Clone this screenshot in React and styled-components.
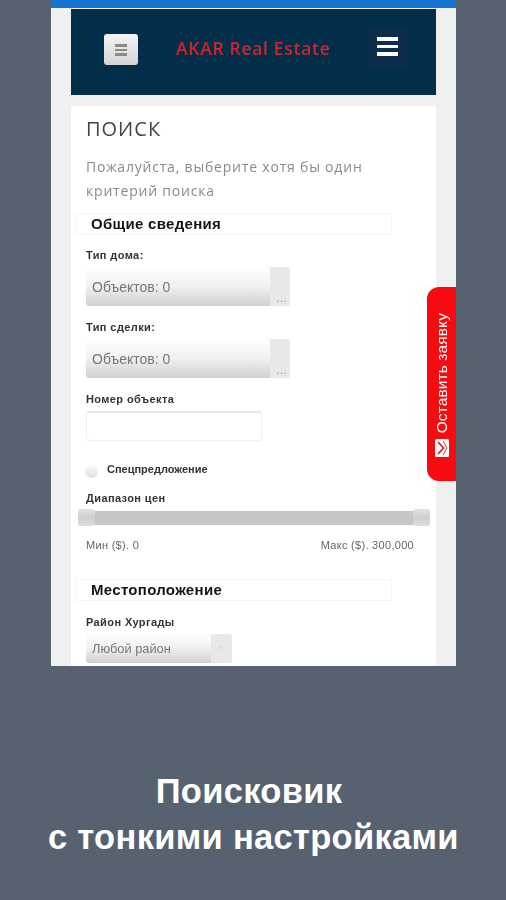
import React from "react";
import styled, { createGlobalStyle } from "styled-components";

const GlobalStyle = createGlobalStyle`
    html, body {
        margin: 0;
        padding: 0;
        background: #566270;
    }
    * {
        box-sizing: border-box;
    }
`;

function Select({ width, height, text, side, size, dots }) {
    return (
        <SelectBox $width={width} $height={height}>
            <SelectText $size={size}>{text}</SelectText>
            <SelectSide $side={side}>{dots ? <Dots>...</Dots> : <Caret />}</SelectSide>
        </SelectBox>
    );
}

function App() {
    return (
        <>
            <GlobalStyle />
            <Page>
                <Screen>
                    <StatusBar />
                    <Content>
                        <Header>
                            <MenuBtn>
                                <MenuIcon />
                            </MenuBtn>
                            <Brand>AKAR Real Estate</Brand>
                            <Burger>
                                <BurgerLine />
                                <BurgerLine />
                                <BurgerLine />
                            </Burger>
                        </Header>
                        <Card>
                            <Title>ПОИСК</Title>
                            <Intro>Пожалуйста, выберите хотя бы один критерий поиска</Intro>
                            <Legend>Общие сведения</Legend>

                            <Label $top={14}>Тип дома:</Label>
                            <Select width={204} height={39} side={20} size={14} text="Объектов: 0" dots />

                            <Label $top={15}>Тип сделки:</Label>
                            <Select width={204} height={39} side={20} size={14} text="Объектов: 0" dots />

                            <Label $top={15}>Номер объекта</Label>
                            <Input />

                            <RadioRow>
                                <Radio />
                                <RadioLabel>Спецпредложение</RadioLabel>
                            </RadioRow>

                            <Label $top={14}>Диапазон цен</Label>
                            <Slider>
                                <Handle $side="left" />
                                <Handle $side="right" />
                            </Slider>
                            <Range>
                                <span>Мин ($). 0</span>
                                <span>Макс ($). 300,000</span>
                            </Range>

                            <Legend $top={27}>Местоположение</Legend>
                            <Label $top={15}>Район Хургады</Label>
                            <Select width={146} height={29} side={21} size={12.8} text="Любой район" />
                        </Card>
                    </Content>
                    <RequestTab>
                        <MailIcon viewBox="0 0 14 18">
                            <rect x="0" y="0" width="14" height="18" rx="1.5" fill="#fff" />
                            <path d="M3 3 L8.5 9 L3 15" fill="none" stroke="#f00b12" strokeWidth="1.6" />
                            <path d="M8 2 L12 9 L8 16" fill="none" stroke="#f00b12" strokeWidth="0.8" />
                        </MailIcon>
                        <RequestText>Оставить заявку</RequestText>
                    </RequestTab>
                </Screen>
                <Caption>
                    Поисковик
                    <br />с тонкими настройками
                </Caption>
            </Page>
        </>
    );
}
export default App;

const Page = styled.div`
    width: 506px;
    height: 900px;
    padding-left: 51px;
    background: #566270;
    overflow: hidden;
`;

const Screen = styled.div`
    position: relative;
    width: 405px;
    height: 666px;
    background: #f0f0f1;
    overflow: hidden;
    filter: blur(0.6px);
`;

const StatusBar = styled.div`
    height: 8px;
    background: #1474d0;
`;

const Content = styled.div`
    padding: 1px 20px 0;
`;

const Header = styled.div`
    display: flex;
    align-items: flex-start;
    height: 86px;
    padding: 19px 29px 0 33px;
    background: #022e49;
`;

const MenuBtn = styled.div`
    display: flex;
    align-items: center;
    justify-content: center;
    width: 34px;
    height: 31px;
    margin-top: 6px;
    border-radius: 3px;
    background: linear-gradient(#f4f4f4, #d4d4d4);
`;

const MenuIcon = styled.div`
    width: 12px;
    height: 12px;
    border-top: 3px solid #8a8a8a;
    border-bottom: 3px solid #8a8a8a;
    background: linear-gradient(#8a8a8a, #8a8a8a) center / 100% 2px no-repeat;
`;

const Brand = styled.div`
    flex: 1;
    margin: 8px 0 0 38px;
    font-family: "Open Sans", sans-serif;
    font-size: 17.5px;
    font-weight: 600;
    line-height: 24px;
    letter-spacing: 0.7px;
    white-space: nowrap;
    color: #d0242f;
`;

const Burger = styled.div`
    display: flex;
    flex-direction: column;
    align-items: center;
    justify-content: center;
    gap: 4px;
    width: 40px;
    height: 40px;
    padding-bottom: 3px;
    background: #0e2d4c;
`;

const BurgerLine = styled.div`
    width: 21px;
    height: 3.5px;
    background: #fff;
`;

const Card = styled.div`
    height: 560px;
    margin-top: 11px;
    padding: 10px 15px 0;
    background: #fff;
`;

const Title = styled.h1`
    margin: 0;
    font-family: "Open Sans", sans-serif;
    font-size: 20px;
    font-weight: 400;
    line-height: 26px;
    letter-spacing: 1px;
    color: #444;
`;

const Intro = styled.p`
    margin: 13px 0 0;
    width: 300px;
    font-family: "Open Sans", sans-serif;
    font-size: 14px;
    line-height: 24px;
    letter-spacing: 0.8px;
    color: #8a8a8a;
`;

const Legend = styled.div`
    width: 316px;
    height: 22px;
    margin: ${(p) => p.$top || 10}px 0 0 -10px;
    padding-left: 14px;
    border: 1px solid #f6f6f6;
    font-family: "Liberation Sans", sans-serif;
    font-size: 15px;
    font-weight: 700;
    line-height: 20px;
    letter-spacing: 0.3px;
    color: #151515;
`;

const Label = styled.div`
    margin-top: ${(p) => p.$top}px;
    font-family: "Liberation Sans", sans-serif;
    font-size: 11px;
    font-weight: 700;
    line-height: 12px;
    letter-spacing: 0.4px;
    color: #333;
`;

const SelectBox = styled.div`
    display: flex;
    width: ${(p) => p.$width}px;
    height: ${(p) => p.$height}px;
    margin-top: 6px;
    border-radius: 3px;
    overflow: hidden;
    background: linear-gradient(#fcfcfc 8%, #f0f0f0 50%, #d0d0d0 100%);
`;

const SelectText = styled.div`
    flex: 1;
    align-self: center;
    padding-left: 6px;
    font-family: "Liberation Sans", sans-serif;
    font-size: ${(p) => p.$size}px;
    color: #777;
`;

const SelectSide = styled.div`
    position: relative;
    width: ${(p) => p.$side}px;
    background: #e8e8e8;
`;

const Dots = styled.span`
    position: absolute;
    right: 3px;
    bottom: 2px;
    font-family: "Liberation Sans", sans-serif;
    font-size: 11px;
    line-height: 11px;
    letter-spacing: 0.5px;
    color: #999;
`;

const Caret = styled.span`
    position: absolute;
    top: 12px;
    left: 7px;
    border: 3px solid transparent;
    border-top: 4px solid #dcdcdc;
`;

const Input = styled.div`
    width: 176px;
    height: 30px;
    margin-top: 6px;
    border: 1px solid #f0f0f0;
    border-top: 2px solid #e8e8e8;
    border-radius: 3px;
    background: #fff;
`;

const RadioRow = styled.div`
    display: flex;
    align-items: flex-start;
    margin: 22px 0 0 -1px;
`;

const Radio = styled.div`
    width: 13px;
    height: 13px;
    margin-top: 2px;
    border-radius: 50%;
    background: linear-gradient(#fafafa, #dedede);
`;

const RadioLabel = styled.div`
    margin-left: 9px;
    font-family: "Liberation Sans", sans-serif;
    font-size: 11px;
    font-weight: 700;
    line-height: 12px;
    color: #333;
`;

const Slider = styled.div`
    position: relative;
    width: 352px;
    height: 14px;
    margin: 7px 0 0 -8px;
    border-radius: 3px;
    background: #c6c6c6;
`;

const Handle = styled.div`
    position: absolute;
    top: -2px;
    ${(p) => p.$side}: 0;
    width: 17px;
    height: 17px;
    border-radius: 3px;
    background: linear-gradient(#e2e2e2, #cfcfcf 50%, #dedede);
`;

const Range = styled.div`
    display: flex;
    justify-content: space-between;
    width: 328px;
    margin-top: 14px;
    font-family: "Liberation Sans", sans-serif;
    font-size: 11px;
    line-height: 13px;
    letter-spacing: 0.3px;
    color: #666;
`;

const RequestTab = styled.div`
    position: absolute;
    top: 287px;
    right: 0;
    display: flex;
    flex-direction: column-reverse;
    align-items: center;
    justify-content: flex-start;
    width: 29px;
    height: 194px;
    padding-bottom: 24px;
    border-radius: 12px 0 0 12px;
    background: #f70b11;
`;

const MailIcon = styled.svg`
    width: 14px;
    height: 18px;
    margin-top: 6px;
`;

const RequestText = styled.div`
    writing-mode: vertical-rl;
    transform: rotate(180deg);
    font-family: "Liberation Sans", sans-serif;
    font-size: 15.5px;
    line-height: 18px;
    letter-spacing: 0.1px;
    white-space: nowrap;
    color: #fff;
`;

const Caption = styled.div`
    width: 402px;
    margin: 102px 0 0 -3px;
    font-family: "Liberation Sans", sans-serif;
    font-size: 34.5px;
    font-weight: 700;
    line-height: 46px;
    letter-spacing: 0.3px;
    white-space: nowrap;
    text-align: center;
    color: #fff;
`;
